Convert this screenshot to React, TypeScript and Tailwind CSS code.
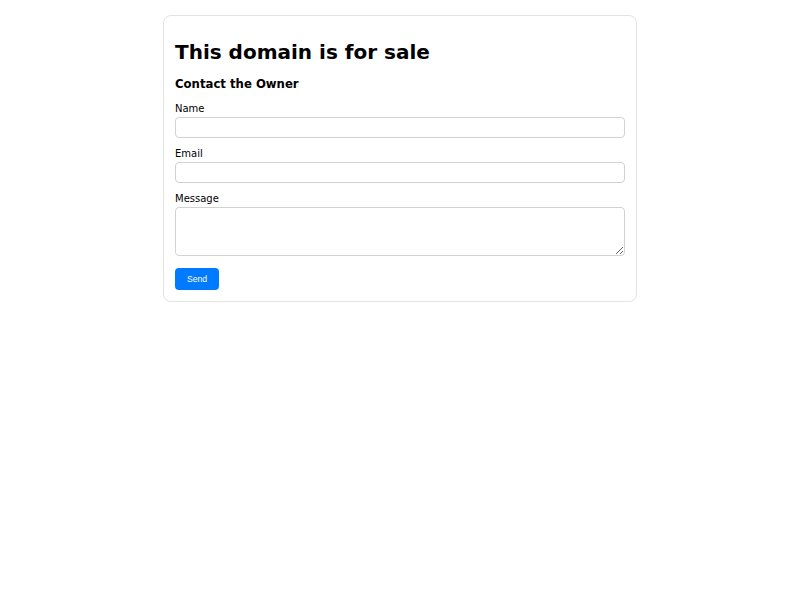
export default function App() {
  return (
    <div className="min-h-screen bg-white pt-[15px] font-['DejaVu_Sans',sans-serif] text-black">
      <div className="mx-auto w-[474px] rounded-lg border border-[#e3e3e3] px-[11px] pt-[21px] pb-[11px]">
        <h1 className="text-[20px] font-bold leading-[30px]">This domain is for sale</h1>
        <h2 className="mt-[8px] text-[11.7px] font-bold leading-[18px]">Contact the Owner</h2>
        <form className="mt-[7px]" onSubmit={(e) => e.preventDefault()}>
          <label className="block text-[10px] leading-[17px]">Name</label>
          <input
            type="text"
            className="mb-[7px] block h-[21px] w-full rounded border border-[#d2d2d2] px-1 text-[10px]"
          />
          <label className="block text-[10px] leading-[17px]">Email</label>
          <input
            type="email"
            className="mb-[7px] block h-[21px] w-full rounded border border-[#d2d2d2] px-1 text-[10px]"
          />
          <label className="block text-[10px] leading-[17px]">Message</label>
          <textarea className="block h-[49px] w-full rounded border border-[#d2d2d2] px-1 text-[10px]" />
          <button
            type="submit"
            className="mt-[12px] block h-[22px] w-[44px] rounded bg-[#007bff] font-['Liberation_Sans',sans-serif] text-[8.67px] text-white"
          >
            Send
          </button>
        </form>
      </div>
    </div>
  );
}
